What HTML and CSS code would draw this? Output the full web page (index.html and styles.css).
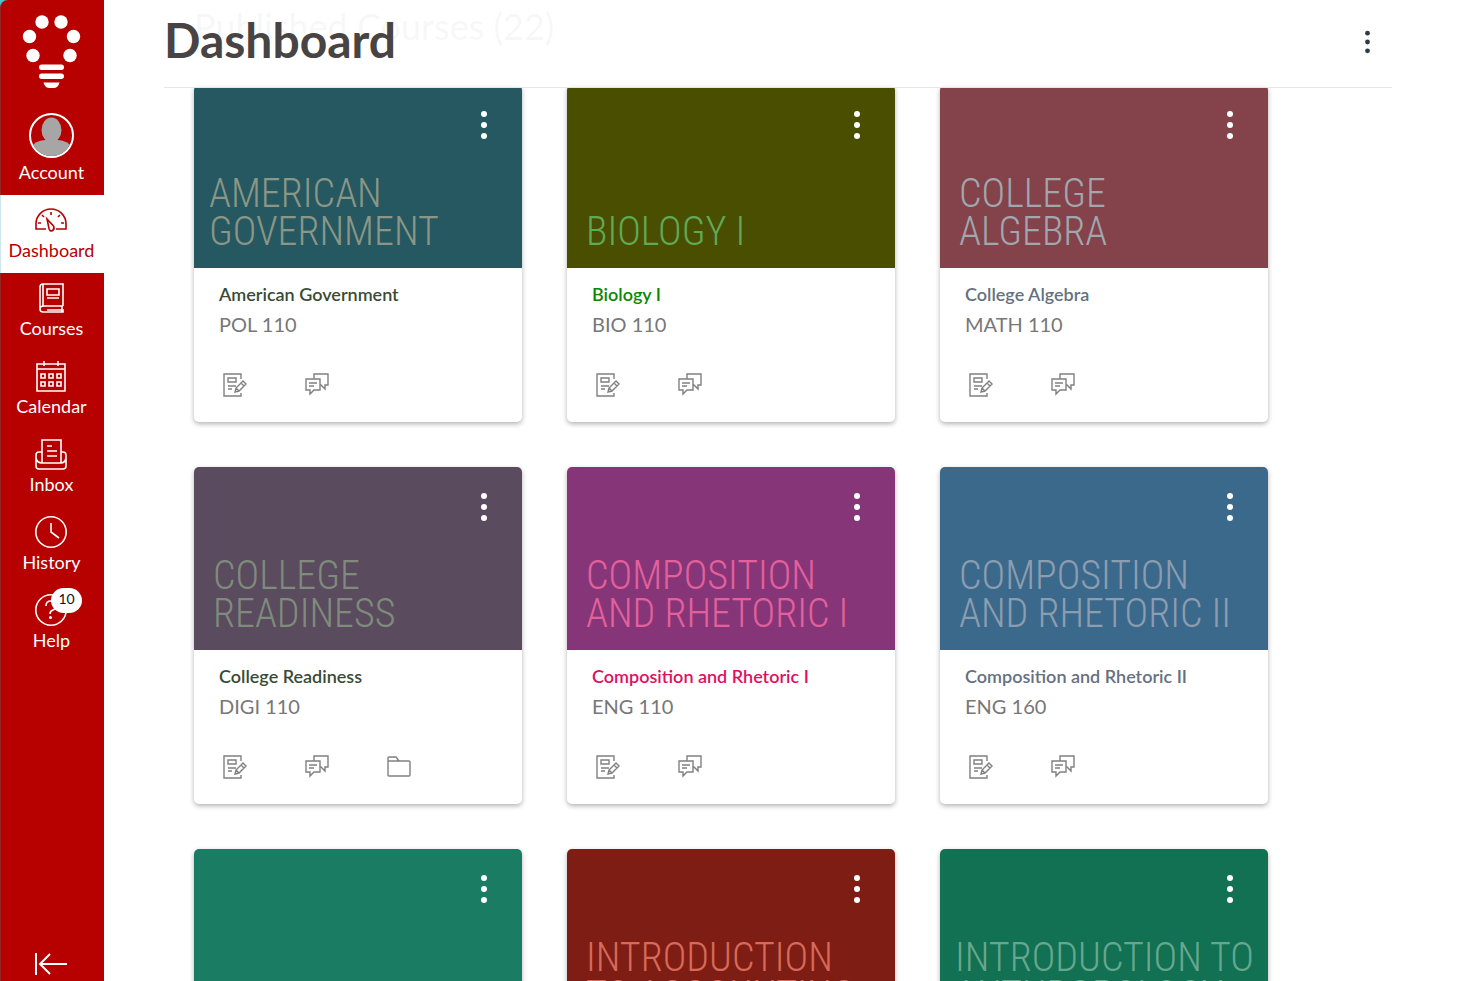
FILE: index.html
```html
<!DOCTYPE html>
<html lang="en">
<head>
<meta charset="utf-8">
<title>Dashboard</title>
<link rel="stylesheet" href="styles.css">
</head>
<body>
<svg class="sprite" aria-hidden="true">
  <symbol id="assignment" viewBox="0 0 24 24"><path d="M18 6V1H1v22h17v-3M5 5h8v4H5zM5 13h8M5 16h4"/><path d="m12 19 1-4 7-7 3 3-7 7zM18 10l3 3M13 15l3 3"/></symbol>
  <symbol id="discussion" viewBox="0 0 24 24"><path d="M9 6V1h14v11h-3v4l-4-4h-1"/><path d="M1 6h14v11H9l-4 4v-4H1zM4 10h8M4 13h5"/></symbol>
  <symbol id="folder" viewBox="0 0 24 24"><path d="M1 6V3q0-1 1-1h7l3 4h10q1 0 1 1v13q0 1-1 1H2q-1 0-1-1zM1 6h11"/></symbol>
  <symbol id="kebab" viewBox="0 0 8 30"><circle cx="4" cy="4" r="3"/><circle cx="4" cy="15" r="3"/><circle cx="4" cy="26" r="3"/></symbol>
</svg>
<div class="app">
  <nav class="sidebar" aria-label="Global navigation">
    <a class="logo" href="#" aria-label="Home">
      <svg viewBox="0 0 60 76"><circle cx="20" cy="8" r="6.7"/><circle cx="39" cy="8" r="6.7"/><circle cx="7.500" cy="22.500" r="6.700"/><circle cx="51.500" cy="22.500" r="6.700"/><circle cx="11" cy="41.500" r="6.700"/><circle cx="48" cy="41.500" r="6.700"/><rect x="17" y="50.500" width="25" height="5.500" rx="2.700"/><rect x="17" y="59.500" width="25" height="5.500" rx="2.700"/><path d="M21.500 68.500h16q-1.500 5.500-6 5.500h-4q-4.500 0-6-5.500z"/></svg>
    </a>
    <a class="item account" href="#">
      <span class="avatar"><svg viewBox="0 0 41 41"><ellipse cx="20.500" cy="15" rx="10" ry="12.500"/><path d="M0 41V32Q4 26 14 25h13q10 1 14 7v9z"/></svg></span>
      <span>Account</span>
    </a>
    <a class="item active" href="#" aria-current="page">
      <svg viewBox="0 0 32 32"><path d="M11 25H1v-5a15 15 0 0 1 30 0v5H21M16 8v3M7 11l2 2M25 11l-2 2M3 19h3M29 19h-3"/><path d="m12 15 6.500 7q1.500 3-1 4.500t-3.500-2z"/></svg>
      <span>Dashboard</span>
    </a>
    <a class="item" href="#">
      <svg viewBox="0 0 32 32"><path d="M28 24V2H8Q5 2 5 5v22q0 3 3 3h20v-2H12M28 24H9q-4 0-4 3M8 2v22M27 24v6M12 7h12v6H12zM12 16h12"/></svg>
      <span>Courses</span>
    </a>
    <a class="item" href="#">
      <svg viewBox="0 0 32 32"><path d="M2 4h28v27H2zM2 9h28M9 1v5M23 1v5M6 14h4v4H6zM14 14h4v4h-4zM22 14h4v4h-4zM6 22h4v4H6zM14 22h4v4h-4zM22 22h4v4h-4z"/></svg>
      <span>Calendar</span>
    </a>
    <a class="item" href="#">
      <svg viewBox="0 0 32 32"><path d="M7 25V2h19v23M7 14H4q-3 0-3 3v11q0 3 3 3h24q3 0 3-3V17q0-3-3-3h-2M1 20q1 5 6 5h19q4 0 5-5M12 8h5M12 13h10M12 18h10"/></svg>
      <span>Inbox</span>
    </a>
    <a class="item" href="#">
      <svg viewBox="0 0 32 32"><circle cx="16" cy="16" r="15.200"/><path d="M16 7v9l8 6"/></svg>
      <span>History</span>
    </a>
    <a class="item" href="#">
      <svg viewBox="0 0 32 32"><circle cx="16" cy="16" r="15.200"/><path d="M11 12q0-5 5-5 5 0 5 5 0 3-3 4-3 1-3 4"/><circle class="dot" cx="15.500" cy="23.500" r="1.500"/></svg>
      <span class="badge">10</span>
      <span>Help</span>
    </a>
    <button class="collapse" type="button" aria-label="Minimize global navigation"><svg viewBox="0 0 32 24"><path d="M1 1v22M32 12H5M15 2 5 12l10 10"/></svg></button>
  </nav>

  <main class="main">
    <header class="header">
      <h1>Dashboard</h1>
      <button class="options" type="button" aria-label="Dashboard options"><svg><use href="#kebab"/></svg></button>
    </header>
    <section class="courses">
      <h2>Published Courses (22)</h2>
      <div class="grid">
        <article class="card government">
          <div class="banner wide"><button class="menu" type="button" aria-label="Card options"><svg><use href="#kebab"/></svg></button><p>AMERICAN<br>GOVERNMENT</p></div>
          <div class="body"><h3>American Government</h3><p>POL 110</p>
            <div class="links"><a href="#" aria-label="Assignments"><svg><use href="#assignment"/></svg></a><a href="#" aria-label="Discussions"><svg><use href="#discussion"/></svg></a></div></div>
        </article>
        <article class="card biology">
          <div class="banner"><button class="menu" type="button" aria-label="Card options"><svg><use href="#kebab"/></svg></button><p>BIOLOGY I</p></div>
          <div class="body"><h3>Biology I</h3><p>BIO 110</p>
            <div class="links"><a href="#" aria-label="Assignments"><svg><use href="#assignment"/></svg></a><a href="#" aria-label="Discussions"><svg><use href="#discussion"/></svg></a></div></div>
        </article>
        <article class="card algebra">
          <div class="banner"><button class="menu" type="button" aria-label="Card options"><svg><use href="#kebab"/></svg></button><p>COLLEGE<br>ALGEBRA</p></div>
          <div class="body"><h3>College Algebra</h3><p>MATH 110</p>
            <div class="links"><a href="#" aria-label="Assignments"><svg><use href="#assignment"/></svg></a><a href="#" aria-label="Discussions"><svg><use href="#discussion"/></svg></a></div></div>
        </article>
        <article class="card readiness">
          <div class="banner"><button class="menu" type="button" aria-label="Card options"><svg><use href="#kebab"/></svg></button><p>COLLEGE<br>READINESS</p></div>
          <div class="body"><h3>College Readiness</h3><p>DIGI 110</p>
            <div class="links"><a href="#" aria-label="Assignments"><svg><use href="#assignment"/></svg></a><a href="#" aria-label="Discussions"><svg><use href="#discussion"/></svg></a><a href="#" aria-label="Files"><svg><use href="#folder"/></svg></a></div></div>
        </article>
        <article class="card rhetoric-one">
          <div class="banner"><button class="menu" type="button" aria-label="Card options"><svg><use href="#kebab"/></svg></button><p>COMPOSITION<br>AND RHETORIC I</p></div>
          <div class="body"><h3>Composition and Rhetoric I</h3><p>ENG 110</p>
            <div class="links"><a href="#" aria-label="Assignments"><svg><use href="#assignment"/></svg></a><a href="#" aria-label="Discussions"><svg><use href="#discussion"/></svg></a></div></div>
        </article>
        <article class="card rhetoric-two">
          <div class="banner"><button class="menu" type="button" aria-label="Card options"><svg><use href="#kebab"/></svg></button><p>COMPOSITION<br>AND RHETORIC II</p></div>
          <div class="body"><h3>Composition and Rhetoric II</h3><p>ENG 160</p>
            <div class="links"><a href="#" aria-label="Assignments"><svg><use href="#assignment"/></svg></a><a href="#" aria-label="Discussions"><svg><use href="#discussion"/></svg></a></div></div>
        </article>
        <article class="card teal">
          <div class="banner"><button class="menu" type="button" aria-label="Card options"><svg><use href="#kebab"/></svg></button></div>
        </article>
        <article class="card accounting">
          <div class="banner"><button class="menu" type="button" aria-label="Card options"><svg><use href="#kebab"/></svg></button><p>INTRODUCTION<br>TO ACCOUNTING</p></div>
        </article>
        <article class="card anthropology">
          <div class="banner wide"><button class="menu" type="button" aria-label="Card options"><svg><use href="#kebab"/></svg></button><p>INTRODUCTION TO<br>ANTHROPOLOGY</p></div>
        </article>
      </div>
    </section>
  </main>
</div>
</body>
</html>
```

FILE: styles.css
```css
* { box-sizing: border-box; }
body { margin: 0; font-family: Lato, sans-serif; color: #484444; background: #fff; }
h1, h2, h3, p { margin: 0; }
a { color: inherit; text-decoration: none; }
button { padding: 0; border: 0; background: none; color: inherit; font: inherit; cursor: pointer; }
svg { display: block; }
.sprite { position: absolute; width: 0; height: 0; }

.app { display: flex; height: 100vh; overflow: hidden; background: linear-gradient(90deg, #4cc4c8 16px, #fff 16px); }

.sidebar {
  display: flex; flex-direction: column; flex: none; width: 104px;
  background: #b70000; color: #fff; border-left: 1px solid #952626; border-top-left-radius: 8px;
}
.logo { display: flex; justify-content: center; height: 104px; padding: 14px 2px 0 0; }
.logo svg { width: 60px; height: 76px; fill: #fff; }
.item {
  position: relative; display: flex; flex-direction: column; align-items: center; gap: 3px;
  padding: 9px 1px 12px 0; font-size: 18px; line-height: 22px; margin-left: -1px;
}
.item > svg { width: 32px; height: 32px; margin-right: 1px; fill: none; stroke: currentColor; stroke-width: 1.6; }
.item .dot { fill: currentColor; stroke: none; }
.item.active { background: #fff; color: #b70000; box-shadow: inset 1px 0 #cde8ea; }
.avatar { width: 45px; height: 45px; border: 2px solid #fff; border-radius: 50%; overflow: hidden; }
.avatar svg { width: 41px; height: 41px; fill: #a6a6a6; }
.badge {
  position: absolute; left: 51px; top: 3px; width: 31px; height: 25px; border-radius: 13px;
  background: #fff; color: #111; font-size: 14px; line-height: 22px; text-align: center;
}
.collapse { display: flex; justify-content: center; margin-top: auto; padding: 0 4px 5px 0; }
.collapse svg { width: 32px; height: 24px; fill: none; stroke: #fff; stroke-width: 2; }

.main { position: relative; flex: 1; min-width: 0; overflow: hidden; padding: 0 68px 0 60px; background: #fff; }
.header {
  position: absolute; z-index: 1; top: 0; left: 60px; right: 68px; height: 88px;
  display: flex; justify-content: space-between; align-items: flex-start;
  background: rgba(255, 255, 255, 0.96); border-bottom: 1px solid #e6e6e6;
}
.header h1 { font-size: 48px; line-height: 80px; font-weight: 700; }
.options { padding: 30px 21px 0 0; }
.options svg { width: 7px; height: 24px; fill: #2d3b45; }

.courses { padding: 0 0 0 30px; }
.courses h2 { font-size: 36px; line-height: 52px; font-weight: 400; margin-bottom: 33px; }
.grid { display: grid; grid-template-columns: repeat(auto-fill, 328px); gap: 45px; }
.card { border-radius: 5px; overflow: hidden; background: #fff; box-shadow: 0 2px 5px rgba(0, 0, 0, 0.3); }
.banner {
  position: relative; display: flex; align-items: flex-end; height: 183px; padding: 0 0 17px 19px;
  background: var(--banner); color: var(--art); white-space: nowrap;
  font-family: "Roboto Condensed", "Open Sans Condensed", "Liberation Sans Narrow", Lato, sans-serif;
  font-size: 40px; line-height: 38px; font-weight: 300;
}
.banner.wide { padding-left: 15px; }
.menu { position: absolute; top: 25px; right: 34px; }
.menu svg { width: 8px; height: 30px; fill: #fff; }
.body { height: 154px; padding: 14px 25px; }
.body h3 { color: var(--title); font-size: 18px; line-height: 24px; font-weight: 600; }
.body p { margin-top: 6px; color: #777; font-size: 20px; line-height: 24px; }
.links { display: flex; gap: 58px; padding: 37px 4px 0; }
.links svg { width: 24px; height: 24px; fill: none; stroke: #808080; stroke-width: 1.4; }

.government { --banner: #265861; --art: #8b9686; --title: #394b34; }
.biology { --banner: #494e00; --art: #5fa957; --title: #0b8700; }
.algebra { --banner: #84424a; --art: #a0a7ae; --title: #657180; }
.readiness { --banner: #5a4b5e; --art: #7f8b7c; --title: #394b34; }
.rhetoric-one { --banner: #873579; --art: #e2619b; --title: #df0f62; }
.rhetoric-two { --banner: #3b698c; --art: #8d9db0; --title: #657180; }
.teal { --banner: #197c63; }
.accounting { --banner: #7e1d13; --art: #d76a5a; }
.anthropology { --banner: #117152; --art: #68a78f; }
```
